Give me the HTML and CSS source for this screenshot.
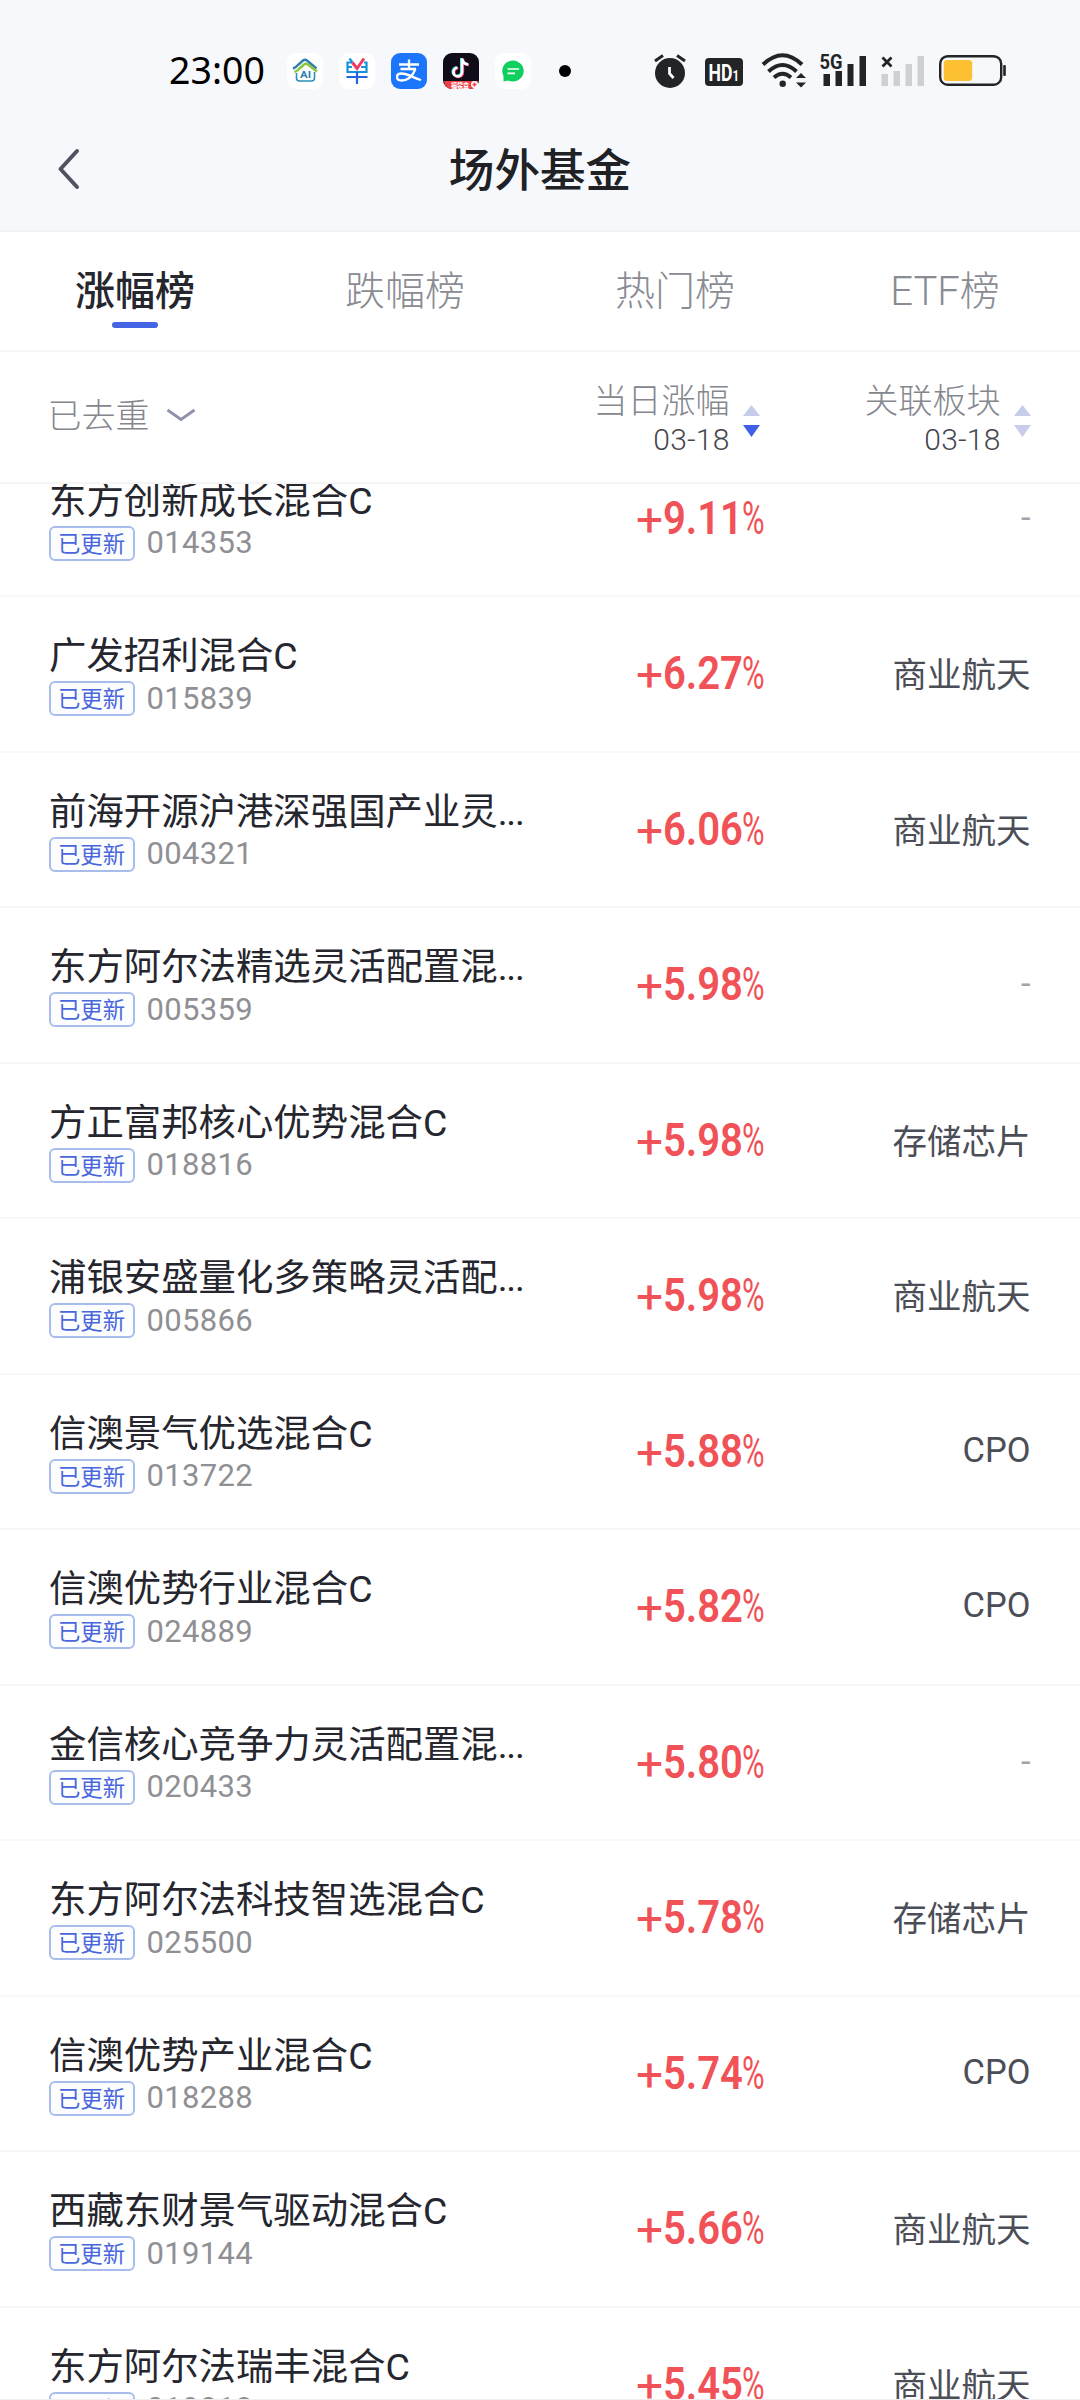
FILE: index.html
```html
<!DOCTYPE html>
<html lang="zh-CN">
<head>
<meta charset="utf-8">
<title>场外基金</title>
<link rel="stylesheet" href="styles.css">
</head>
<body>
<div class="screen">
<header class="top">
  <div class="status">
    <span class="time">23:00</span>
    <div class="apps">
      <svg class="app" viewBox="0 0 36 36"><rect width="36" height="36" rx="9" fill="#fff"/><path d="M6 15.500Q9 14.500 12 11L16 7.500Q18 6 20 7.500L29.500 15.500" fill="none" stroke="#2b7fb0" stroke-width="2.400"/><path d="M7.500 19Q10.500 18 13 15L17 11.500Q19 10 21 11.500L30 18.500" fill="none" stroke="#8cc63f" stroke-width="2.600"/><path d="M9.500 20V25Q9.500 28 12.500 28H24.500Q27.500 28 27.500 25V19" fill="none" stroke="#2b8fb8" stroke-width="1.600"/><text x="18.500" y="25" text-anchor="middle" class="ai" textLength="11" lengthAdjust="spacingAndGlyphs">AI</text></svg>
      <svg class="app" viewBox="0 0 36 36"><rect width="36" height="36" rx="9" fill="#fff"/><g fill="none" stroke-width="2.200"><path d="M13 9.500H8.500V19H27.500V9.500H25" stroke="#1592dc"/><path d="M8.500 14H13M22 14H27.500" stroke="#1592dc"/><path d="M7.500 24H28.500M18 19V31" stroke="#2266d8"/><path d="M10.500 5.500L13.500 9.500" stroke="#1592dc"/><path d="M13.500 9.500L18 15.500L25 5.500" stroke="#ef3c66" stroke-width="3"/></g></svg>
      <svg class="app" viewBox="0 0 36 36"><rect width="36" height="36" rx="9" fill="#1c76fb"/><g fill="none" stroke="#fff" stroke-width="2.300"><path d="M8 11.500H28M18 6.500V16M9.500 16H25"/><path d="M24.500 16C22 22 17 27.500 10.500 27.500C4.500 27.500 4.500 20.500 10.500 20.500C17 20.500 22 25 30 27"/></g></svg>
      <svg class="app" viewBox="0 0 36 36"><rect width="36" height="36" rx="9" fill="#100c18"/><g fill="none" stroke-width="2.600"><path d="M18.300 5V18.500A4.300 4.300 0 1 1 13.700 14.300M18.300 5Q19 10.500 24.500 11" stroke="#27e8e4"/><path d="M19.900 6V19.500A4.300 4.300 0 1 1 15.300 15.300M19.900 6Q20.500 11.500 26 12" stroke="#f52b59"/><path d="M19.100 5.500V19A4.300 4.300 0 1 1 14.500 14.800M19.100 5.500Q19.700 11 25.300 11.500" stroke="#fff"/></g><path d="M1 28H35Q34 36 27 36H9Q2 36 1 28Z" fill="#ee4146"/><text x="8" y="34.500" class="promo" textLength="18" lengthAdjust="spacingAndGlyphs">福袋盒</text><circle cx="31.500" cy="31.500" r="3.500" fill="#fff"/><path d="M31.500 29.500V33.500M29.500 31.500H33.500" stroke="#ee4146" stroke-width="1.500"/></svg>
      <svg class="app" viewBox="0 0 36 36"><rect width="36" height="36" rx="9" fill="#fff"/><path d="M18 7.500A11 10.500 0 1 1 13 27.500L8.500 28.500L8.500 23A10.700 10.500 0 0 1 18 7.500Z" fill="#0fcf5f"/><path d="M12.500 16H24M12.500 20.300H20" stroke="#fff" stroke-width="1.700"/></svg>
    </div>
    <span class="dot"></span>
    <svg class="sys" viewBox="640 50 380 42" fill="#222426">
      <circle cx="670" cy="73" r="15"/><path d="M655 61L663 55.500M677 55.500L685 61" stroke="#222426" stroke-width="3"/><path d="M669.500 67V73.500L673.500 78" fill="none" stroke="#f7f8fc" stroke-width="2.800"/>
      <rect x="705" y="58" width="38" height="28" rx="4"/><text x="708.500" y="80.500" class="hd" textLength="30.500" lengthAdjust="spacingAndGlyphs">HD<tspan class="one">1</tspan></text>
      <g fill="none" stroke="#222426" stroke-width="4"><path d="M763 64.500Q782.500 46 802 64.500"/><path d="M768.500 71.500Q782.500 58.500 796.500 71.500"/><path d="M774 77.500Q782.500 70 791 77.500"/></g><circle cx="782.700" cy="83.700" r="3.200"/><path d="M796 78L801 73L806 78ZM796 82.500L801 87.500L806 82.500Z"/>
      <text x="819.500" y="68.500" class="g5" textLength="23" lengthAdjust="spacingAndGlyphs">5G</text>
      <path d="M823.500 74h6.500v12h-6.500zM835.500 71h6.500v15h-6.500zM847.500 64h6v22h-6zM859.500 56h6.500v30h-6.500z"/>
      <path d="M882.500 57.500L891.500 66.500M891.500 57.500L882.500 66.500" stroke="#222426" stroke-width="2.800"/>
      <path d="M881.500 74h6.500v12h-6.500zM893.500 71h6.500v15h-6.500zM905.500 64h6.500v22h-6.500zM917.500 56h6.500v30h-6.500z" fill="#cfd0d4"/>
      <rect x="940.200" y="56.200" width="61" height="28.500" rx="7.500" fill="none" stroke="#222426" stroke-width="2.400"/><rect x="943.700" y="60" width="28.500" height="21" rx="3.500" fill="#fdc033"/><rect x="1003.200" y="65" width="2.600" height="11" rx="1"/>
    </svg>
  </div>
  <div class="nav">
    <svg class="back" viewBox="0 0 24 42"><path d="M20 3L3.500 21L20 39" fill="none" stroke="#505260" stroke-width="4" stroke-linecap="round" stroke-linejoin="round"/></svg>
    <h1 class="title">场外基金</h1>
  </div>
</header>
<nav class="tabs">
  <span class="tab active">涨幅榜</span><span class="tab">跌幅榜</span><span class="tab">热门榜</span><span class="tab">ETF榜</span>
</nav>
<div class="head">
  <div class="filter">已去重<svg class="chev" viewBox="0 0 30 14"><path d="M1.500 2L15 11.500L28.500 2" fill="none" stroke="#8f91ad" stroke-width="2.800"/></svg></div>
  <div class="sort"><div class="labels"><span class="label">当日涨幅</span><span class="date">03-18</span></div><svg class="arrows" viewBox="0 0 17 32"><path d="M0 11L8.500 0L17 11Z" fill="#c5cdea"/><path d="M0 20L8.500 32L17 20Z" fill="#3f5fea"/></svg></div>
  <div class="sort"><div class="labels"><span class="label">关联板块</span><span class="date">03-18</span></div><svg class="arrows" viewBox="0 0 17 32"><path d="M0 11L8.500 0L17 11Z" fill="#c5cdea"/><path d="M0 20L8.500 32L17 20Z" fill="#c9cdea"/></svg></div>
</div>
<main class="list">
  <div class="row first"><div class="fund"><div class="name">东方创新成长混合C</div><div class="meta"><span class="badge">已更新</span><span class="code">014353</span></div></div><div class="pct"><i>+</i><b>9.11</b><u>%</u></div><div class="sector none">-</div></div>
  <div class="row"><div class="fund"><div class="name">广发招利混合C</div><div class="meta"><span class="badge">已更新</span><span class="code">015839</span></div></div><div class="pct"><i>+</i><b>6.27</b><u>%</u></div><div class="sector">商业航天</div></div>
  <div class="row"><div class="fund"><div class="name">前海开源沪港深强国产业灵<span class="more">...</span></div><div class="meta"><span class="badge">已更新</span><span class="code">004321</span></div></div><div class="pct"><i>+</i><b>6.06</b><u>%</u></div><div class="sector">商业航天</div></div>
  <div class="row"><div class="fund"><div class="name">东方阿尔法精选灵活配置混<span class="more">...</span></div><div class="meta"><span class="badge">已更新</span><span class="code">005359</span></div></div><div class="pct"><i>+</i><b>5.98</b><u>%</u></div><div class="sector none">-</div></div>
  <div class="row"><div class="fund"><div class="name">方正富邦核心优势混合C</div><div class="meta"><span class="badge">已更新</span><span class="code">018816</span></div></div><div class="pct"><i>+</i><b>5.98</b><u>%</u></div><div class="sector">存储芯片</div></div>
  <div class="row"><div class="fund"><div class="name">浦银安盛量化多策略灵活配<span class="more">...</span></div><div class="meta"><span class="badge">已更新</span><span class="code">005866</span></div></div><div class="pct"><i>+</i><b>5.98</b><u>%</u></div><div class="sector">商业航天</div></div>
  <div class="row"><div class="fund"><div class="name">信澳景气优选混合C</div><div class="meta"><span class="badge">已更新</span><span class="code">013722</span></div></div><div class="pct"><i>+</i><b>5.88</b><u>%</u></div><div class="sector">CPO</div></div>
  <div class="row"><div class="fund"><div class="name">信澳优势行业混合C</div><div class="meta"><span class="badge">已更新</span><span class="code">024889</span></div></div><div class="pct"><i>+</i><b>5.82</b><u>%</u></div><div class="sector">CPO</div></div>
  <div class="row"><div class="fund"><div class="name">金信核心竞争力灵活配置混<span class="more">...</span></div><div class="meta"><span class="badge">已更新</span><span class="code">020433</span></div></div><div class="pct"><i>+</i><b>5.80</b><u>%</u></div><div class="sector none">-</div></div>
  <div class="row"><div class="fund"><div class="name">东方阿尔法科技智选混合C</div><div class="meta"><span class="badge">已更新</span><span class="code">025500</span></div></div><div class="pct"><i>+</i><b>5.78</b><u>%</u></div><div class="sector">存储芯片</div></div>
  <div class="row"><div class="fund"><div class="name">信澳优势产业混合C</div><div class="meta"><span class="badge">已更新</span><span class="code">018288</span></div></div><div class="pct"><i>+</i><b>5.74</b><u>%</u></div><div class="sector">CPO</div></div>
  <div class="row"><div class="fund"><div class="name">西藏东财景气驱动混合C</div><div class="meta"><span class="badge">已更新</span><span class="code">019144</span></div></div><div class="pct"><i>+</i><b>5.66</b><u>%</u></div><div class="sector">商业航天</div></div>
  <div class="row"><div class="fund"><div class="name">东方阿尔法瑞丰混合C</div><div class="meta"><span class="badge">已更新</span><span class="code">019818</span></div></div><div class="pct"><i>+</i><b>5.45</b><u>%</u></div><div class="sector">商业航天</div></div>
</main>
</div>
</body>
</html>
```
FILE: styles.css
```css
* { box-sizing: border-box; }
body { margin: 0; background: #fff; font-family: Roboto, "Noto Sans CJK SC", sans-serif; }
.screen { width: 1080px; height: 2400px; overflow: hidden; display: flex; flex-direction: column; border-bottom: 1px solid #eee; }
.top { height: 232px; flex: none; background: #f7f8fc; border-bottom: 2px solid #f3f3f6; }
.status { height: 109px; padding: 33px 0 0 169px; display: flex; align-items: center; }
.time { width: 118px; font: 450 37.500px/44px "Noto Sans", sans-serif; color: #000; padding-bottom: 2px; }
.apps { display: flex; gap: 16px; }
.app { width: 36px; height: 36px; display: block; }
.dot { width: 12px; height: 12px; border-radius: 50%; background: #000; margin-left: 28px; }
.sys { width: 380px; height: 42px; margin-left: 69px; flex: none; }
.ai { font: 700 9px Roboto, sans-serif; fill: #2b7fb0; }
.promo { font: 700 7px "Noto Sans CJK SC", sans-serif; fill: #fff; }
.hd { font: 700 23px Roboto, sans-serif; fill: #fff; }
.one { font-size: 15px; }
.g5 { font: 700 21px Roboto, sans-serif; }
.nav { height: 121px; display: grid; grid-template-columns: 120px 1fr 120px; align-items: center; padding-bottom: 2px; }
.back { width: 24px; height: 42px; margin-left: 57px; }
.title { margin: 0; padding-bottom: 4px; text-align: center; font: 500 45.600px/60px "Noto Sans CJK SC", sans-serif; color: #202125; }
.tabs { height: 120px; flex: none; display: grid; grid-template-columns: repeat(4, 1fr); border-bottom: 2px solid #f7f7f8; padding-top: 30px; }
.tab { display: flex; flex-direction: column; align-items: center; font-size: 40px; line-height: 60px; font-weight: 300; color: #8a8c94; }
.tab.active { font-weight: 500; color: #25262e; }
.tab.active::after { content: ""; width: 46px; height: 6px; border-radius: 3px; background: #4464e4; }
.head { height: 132px; flex: none; display: grid; grid-template-columns: 413px 298px 271px; padding: 0 48.500px; border-bottom: 2px solid #f5f5f6; position: relative; z-index: 1; background: #fff; }
.filter { display: flex; align-items: center; font-size: 34px; font-weight: 300; line-height: 50px; color: #85878e; padding-bottom: 3px; margin-left: -1px; }
.chev { width: 30px; height: 14px; margin-left: 16px; margin-top: -2px; }
.sort { display: flex; justify-content: flex-end; padding-top: 27px; gap: 13px; }
.labels { display: flex; flex-direction: column; align-items: flex-end; }
.label { font-size: 34px; line-height: 45px; font-weight: 300; color: #85878e; }
.date { font-size: 30px; line-height: 31px; font-weight: 350; color: #45474e; letter-spacing: .2px; }
.arrows { width: 17px; height: 32px; margin-top: 26px; }
.list { flex: 1; min-height: 0; overflow: hidden; }
.row { height: 155.500px; display: grid; grid-template-columns: 500px 215px 1fr; padding: 0 49.500px 0 48.500px; border-bottom: 2px solid #f7f7f8; }
.first { margin-top: -42.500px; }
.fund { padding-top: 34px; }
.name { height: 50px; font-size: 37.400px; line-height: 51px; font-weight: 400; color: #25262e; white-space: nowrap; margin-left: .5px; }
.more { letter-spacing: -1.200px; }
.meta { display: flex; align-items: center; gap: 12px; }
.badge { width: 86px; height: 35px; border: 2px solid #a9bdec; border-radius: 6px; background: #fbfdff; color: #4a66dd; font-size: 22.400px; line-height: 32px; text-align: center; }
.code { font-size: 31px; line-height: 34px; color: #8f9094; letter-spacing: .35px; }
.pct { display: flex; justify-content: flex-end; align-items: center; font-size: 46px; color: #f05257; line-height: 60px; padding-bottom: 1px; }
.pct i, .pct b, .pct u { font-style: normal; text-decoration: none; display: block; transform-origin: 0 50%; }
.pct i { width: 26px; transform: translate(-1px, 2px) scaleX(1.04); font-weight: 400; }
.pct b { width: 79px; transform: scaleX(.87); font-weight: 600; white-space: nowrap; }
.pct u { width: 22px; transform: scaleX(.67); font-weight: 400; }
.sector { display: flex; align-items: center; justify-content: flex-end; font-size: 34.500px; color: #4c4e57; font-weight: 400; padding-bottom: 3px; }
.sector.none { color: #a4a5a9; }
```
